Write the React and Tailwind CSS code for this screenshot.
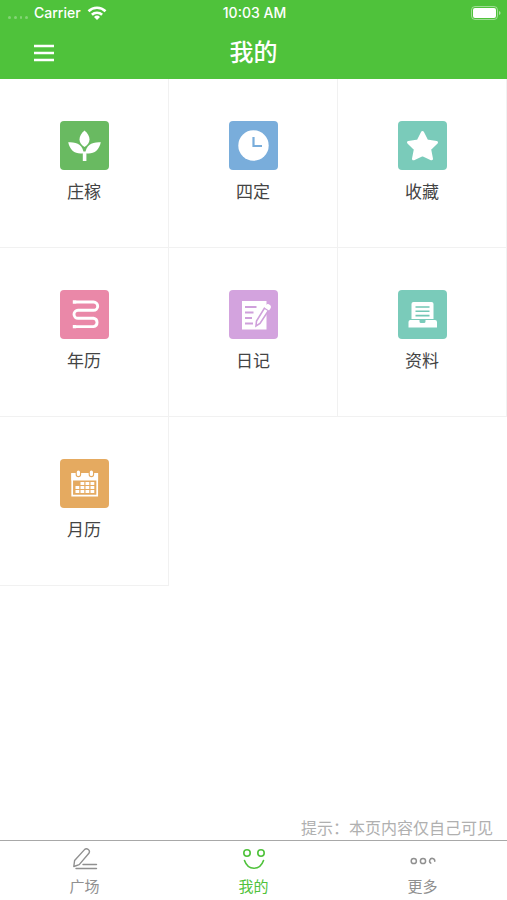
import { useState } from "react";

function WifiIcon() {
  return (
    <svg viewBox="0 0 20 16" className="h-4 w-5" fill="none" stroke="white" strokeWidth="2.6" aria-hidden>
      <path d="M1.5 6.2a12.2 12.2 0 0 1 17 0" />
      <path d="M4.9 9.8a7.3 7.3 0 0 1 10.2 0" />
      <path d="M10 15 7 12a4.3 4.3 0 0 1 6 0z" fill="white" stroke="none" />
    </svg>
  );
}

function BatteryIcon() {
  return (
    <svg viewBox="0 0 30 14" className="h-3.5 w-[30px]" aria-hidden>
      <rect x="0.5" y="0.5" width="26" height="13" rx="3.5" fill="none" stroke="white" strokeOpacity="0.45" />
      <rect x="2" y="2" width="23" height="10" rx="2" fill="white" />
      <path d="M28 5v4q1.6-.6 1.6-2T28 5" fill="white" fillOpacity="0.5" />
    </svg>
  );
}

function LeafIcon() {
  return (
    <svg viewBox="0 0 49 49" fill="white" aria-hidden>
      <path d="M24.5 9.5c3 2.6 5 5.6 5 8.9 0 3-2 5.6-5 7.6-3-2-5-4.6-5-7.6 0-3.3 2-6.3 5-8.900z" />
      <path d="M8.2 21.2c9-.6 14.8 2.8 15.5 11-7.8 1.5-13.8-2.5-15.5-11z" />
      <path d="M40.8 21.2c-9-.6-14.8 2.8-15.5 11 7.8 1.5 13.8-2.5 15.5-11z" />
      <path d="M22.8 30.5h3.6v9.500h-3.6z" />
    </svg>
  );
}

function ClockIcon() {
  return (
    <svg viewBox="0 0 49 49" aria-hidden>
      <circle cx="24.5" cy="24.5" r="15.2" fill="white" />
      <path d="M24.5 16v9h8.5" fill="none" stroke="#79addb" strokeWidth="2.2" />
    </svg>
  );
}

function StarIcon() {
  return (
    <svg viewBox="0 0 49 49" aria-hidden>
      <path
        d="M24.5 11.5l4.3 8.4 9.7 1.5-6.9 6.7 1.9 9.7-9-4.2-9 4.2 1.9-9.7-6.9-6.7 9.7-1.5z"
        fill="white"
        stroke="white"
        strokeWidth="3"
        strokeLinejoin="round"
      />
    </svg>
  );
}

function SnakeIcon() {
  return (
    <svg viewBox="0 0 49 49" fill="none" stroke="white" strokeWidth="2.9" aria-hidden>
      <path d="M16 12H33.5a4.2 4.2 0 0 1 4.2 4.2 4.2 4.2 0 0 1-4.2 4.1H18a4 4 0 0 0-4 4 4 4 0 0 0 4 4H33.500a4.2 4.2 0 0 1 0 8.3H16" />
      <path d="M12.8 12h3.4M12.8 36.6h3.4" strokeWidth="3.4" />
    </svg>
  );
}

function DiaryIcon() {
  return (
    <svg viewBox="0 0 49 49" aria-hidden>
      <path d="M13 11h24.5v28.500H13z" fill="white" />
      <path d="M16 17h11.5M16 22.5h8.5M16 28h7M16 33.5h8" stroke="#cfa0db" strokeWidth="2" />
      <path d="M35.5 18l4 2.5-8.5 13-4 2.5.5-5z" fill="white" stroke="#cfa0db" strokeWidth="1.6" />
      <path d="M36.5 17.2l1-1.4a2 2 0 0 1 2.7-.5 2 2 0 0 1 .6 2.7l-1 1.5z" fill="white" stroke="white" strokeWidth="1.5" />
    </svg>
  );
}

function DataIcon() {
  return (
    <svg viewBox="0 0 49 49" fill="white" aria-hidden>
      <path d="M15.5 12h18a2 2 0 0 1 2 2v15h-22V14a2 2 0 0 1 2-2z" />
      <path d="M17.5 17h14M17.5 21.3h14M17.5 25.6h14" stroke="#73c7b5" strokeWidth="1.6" />
      <path d="M12 30h9.5v1.5a1.5 1.5 0 0 0 1.5 1.5h3a1.5 1.5 0 0 0 1.5-1.5V30H37a2 2 0 0 1 2 2v5.500H10.5V32a2 2 0 0 1 1.5-2z" />
    </svg>
  );
}

function CalendarIcon() {
  return (
    <svg viewBox="0 0 49 49" fill="none" aria-hidden>
      <path d="M12.2 15h25v21.7h-25z" stroke="white" strokeWidth="1.7" />
      <path d="M11.3 14h26.8v7.5H11.3z" fill="white" />
      <path d="M18.4 12v3.5M31.4 12v3.5" stroke="#e5aa60" strokeWidth="5.5" strokeLinecap="round" />
      <path d="M18.4 13v2.5M31.4 13v2.5" stroke="white" strokeWidth="3.2" strokeLinecap="round" />
      <path d="M20.5 24.5h14M15.5 28.5h19M15.5 32.5h19" stroke="white" strokeWidth="3" strokeDasharray="3.8 1.2" />
    </svg>
  );
}

function PenIcon() {
  return (
    <svg viewBox="0 0 26 24" className="h-6 w-[26px]" fill="none" stroke="currentColor" strokeWidth="1.4" aria-hidden>
      <path d="M1.8 19.5l.8-6L12.5 2.600a2.9 2.9 0 0 1 4.400 3.700L7.200 17.600z" strokeLinejoin="round" />
      <path d="M11 17.5h13.5M4 21.5h20.5" strokeLinecap="round" />
    </svg>
  );
}

function SmileIcon() {
  return (
    <svg viewBox="0 0 26 24" className="h-6 w-[26px]" fill="none" stroke="currentColor" strokeWidth="1.6" aria-hidden>
      <circle cx="6" cy="6" r="3.2" />
      <circle cx="20" cy="6" r="3.2" />
      <path d="M3.5 13.5c1.7 5 5.3 7.7 9.5 7.7s7.800-2.700 9.500-7.700" strokeLinecap="round" />
    </svg>
  );
}

function MoreIcon() {
  return (
    <svg viewBox="0 0 26 24" className="h-6 w-[26px]" fill="none" stroke="currentColor" strokeWidth="1.5" aria-hidden>
      <circle cx="3.8" cy="14" r="2.6" />
      <circle cx="13" cy="14" r="2.6" />
      <path d="M20.8 16.2a2.6 2.6 0 1 1 4-2" strokeLinecap="round" />
    </svg>
  );
}

const ITEMS = [
  { label: "庄稼", color: "bg-[#69ba61]", Icon: LeafIcon },
  { label: "四定", color: "bg-[#79addb]", Icon: ClockIcon },
  { label: "收藏", color: "bg-[#7acbba]", Icon: StarIcon },
  { label: "年历", color: "bg-[#ea88a8]", Icon: SnakeIcon },
  { label: "日记", color: "bg-[#d3a3de]", Icon: DiaryIcon },
  { label: "资料", color: "bg-[#7acbba]", Icon: DataIcon },
  { label: "月历", color: "bg-[#e5aa60]", Icon: CalendarIcon },
];

const TABS = [
  { label: "广场", Icon: PenIcon },
  { label: "我的", Icon: SmileIcon },
  { label: "更多", Icon: MoreIcon },
];

export default function App() {
  const [tab, setTab] = useState("我的");

  return (
    <div className="flex min-h-screen flex-col bg-white font-['Inter','Noto_Sans_CJK_SC',sans-serif] text-[#444]">
      <header className="bg-[#4fc23b] text-white">
        {/* status bar */}
        <div className="grid h-[26px] grid-cols-3 items-center pr-1.5 pl-2 text-sm font-medium">
          <div className="flex items-center gap-1.5">
            <div className="flex w-5 gap-[3px] pt-2">
              {[0, 1, 2, 3].map((n) => (
                <span key={n} className="h-[3px] w-[3px] rounded-full bg-white/30" />
              ))}
            </div>
            <span>Carrier</span>
            <WifiIcon />
          </div>
          <span className="text-center">10:03 AM</span>
          <div className="flex justify-end">
            <BatteryIcon />
          </div>
        </div>

        <div className="grid h-[53px] grid-cols-3 items-center px-8">
          <button type="button" aria-label="菜单" className="flex h-6 w-6 items-center justify-center">
            <svg viewBox="0 0 20 18" className="h-[18px] w-5" stroke="white" strokeWidth="2.6" aria-hidden>
              <path d="M0 2h20M0 9h20M0 16h20" />
            </svg>
          </button>
          <h1 className="text-center text-2xl font-medium">我的</h1>
        </div>
      </header>

      <main className="flex flex-1 flex-col">
        <div className="grid grid-cols-3">
          {ITEMS.map(({ label, color, Icon }) => (
            <button
              key={label}
              type="button"
              className="flex aspect-square flex-col items-center justify-center gap-2.5 border-r border-b border-[#f1f1f1] pb-0.5"
            >
              <span className={`block h-[49px] w-[49px] rounded-[4px] ${color}`}>
                <Icon />
              </span>
              <span className="text-[17px] leading-6">{label}</span>
            </button>
          ))}
        </div>
        <p className="mt-auto pr-3.5 text-right text-base text-[#b0b0b0]">提示：本页内容仅自己可见</p>
      </main>

      <nav className="grid h-[60px] grid-cols-3 border-t border-[#a8a8a8]">
        {TABS.map(({ label, Icon }) => (
          <button
            key={label}
            type="button"
            onClick={() => setTab(label)}
            className={`flex flex-col items-center justify-center gap-1 pt-1 text-[15px] leading-6 ${
              tab === label ? "text-[#4fc23b]" : "text-[#909090]"
            }`}
          >
            <Icon />
            <span>{label}</span>
          </button>
        ))}
      </nav>
    </div>
  );
}
